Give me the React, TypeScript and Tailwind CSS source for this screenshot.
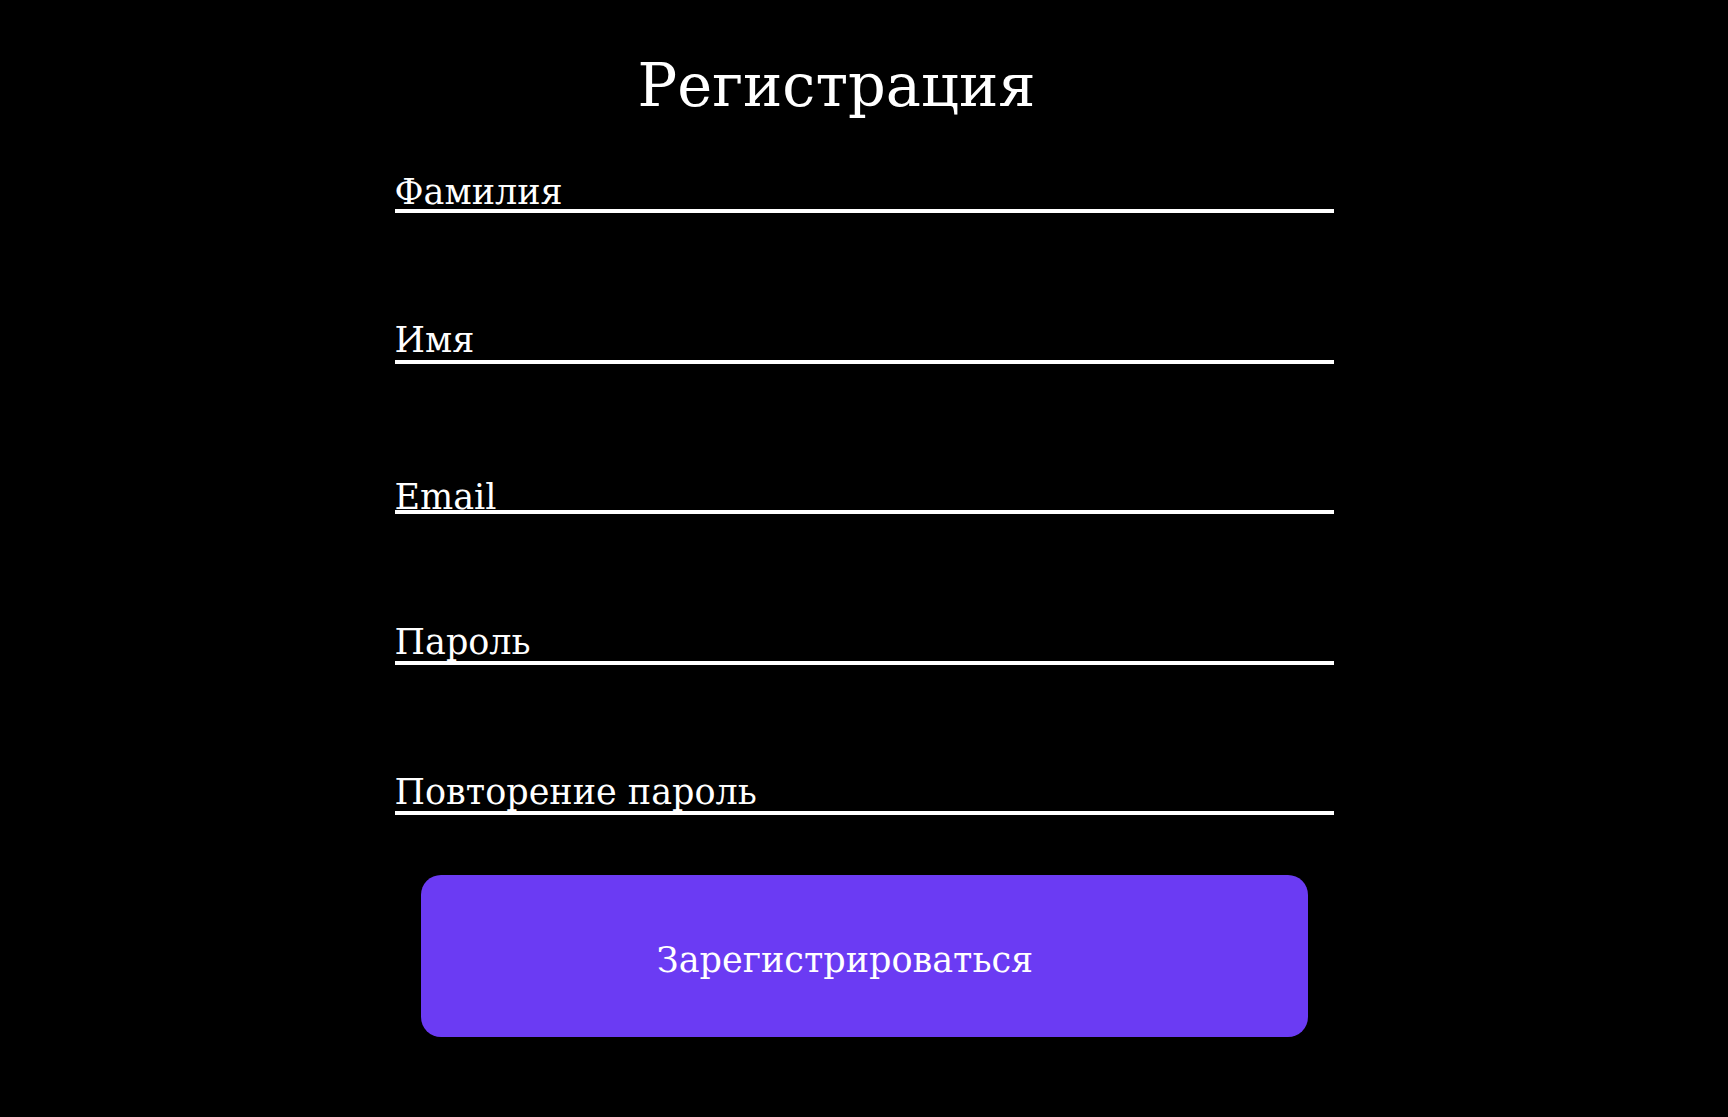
import React from "react";

const fields = [
  { label: "Фамилия", mt: "mt-[64px]", pb: "pb-[4px]" },
  { label: "Имя", mt: "mt-[114px]", pb: "pb-[7px]" },
  { label: "Email", mt: "mt-[120px]", pb: "pb-0" },
  { label: "Пароль", mt: "mt-[115px]", pb: "pb-[6px]" },
  { label: "Повторение пароль", mt: "mt-[114px]", pb: "pb-[6px]" },
];

export default function App() {
  return (
    <div
      className="min-h-[1117px] w-full bg-black text-white"
      style={{ fontFamily: '"DejaVu Serif", "Liberation Serif", serif' }}
    >
      <div className="mx-auto flex w-[939px] flex-col pt-[56px]">
        <h1 className="pr-[55px] text-center text-[59px] font-normal leading-none">
          Регистрация
        </h1>
        {fields.map((f) => (
          <div key={f.label} className={`${f.mt} ${f.pb} border-b-[4px] border-white`}>
            <span className="block text-[35px] leading-[26px]">{f.label}</span>
          </div>
        ))}
        <button className="mx-[26px] mt-[60px] flex h-[162px] items-center justify-center rounded-[20px] bg-[#6b3bf3] pr-[38px] pt-[8px] text-[35px] leading-none text-white">
          Зарегистрироваться
        </button>
      </div>
    </div>
  );
}
